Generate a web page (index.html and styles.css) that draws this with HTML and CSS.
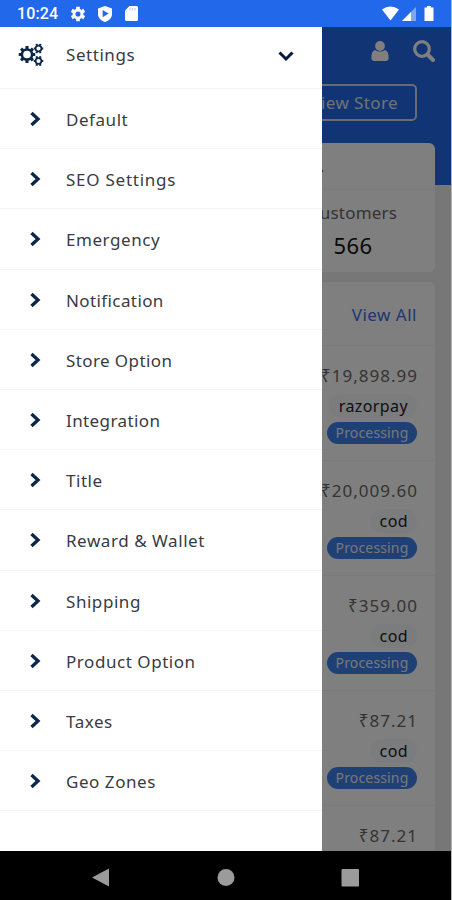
FILE: index.html
```html
<!DOCTYPE html>
<html lang="en">
<head>
<meta charset="utf-8">
<title>Settings</title>
<link rel="stylesheet" href="styles.css">
</head>
<body>
<svg class="defs" width="0" height="0">
  <symbol id="chev" viewBox="0 0 12 16"><path d="M2.500 2 9 8 2.500 14" fill="none" stroke="#0c2848" stroke-width="3.300"/></symbol>
  <symbol id="gear" viewBox="-10 -10 20 20">
    <circle r="6" fill="none" stroke="currentColor" stroke-width="3"/>
    <path d="M0-10V-6M0 10V6M-10 0H-6M10 0H6M-7-7-4.300-4.300M7 7 4.300 4.300M-7 7-4.300 4.300M7-7 4.300-4.300" stroke="currentColor" stroke-width="3.600"/>
  </symbol>
  <symbol id="gear-small" viewBox="-10 -10 20 20">
    <circle r="5.800" fill="none" stroke="currentColor" stroke-width="3.400"/>
    <path d="M-4-9.500-3-6M4-9.500 3-6M-4 9.500-3 6M4 9.500 3 6M-10 0H-6M10 0H6" stroke="currentColor" stroke-width="4.200"/>
  </symbol>
</svg>
<div class="phone">
  <header class="status">
    <span class="clock">10:24</span>
    <svg class="s-gear" width="16" height="16" viewBox="-10 -10 20 20"><circle r="5" fill="none" stroke="#fff" stroke-width="3.600"/><path d="M0-9V-6M0 9V6M-7.800-4.500-5-3M7.800 4.500 5 3M-7.800 4.500-5 3M7.800-4.500 5-3" stroke="#fff" stroke-width="4.600"/></svg>
    <svg class="s-shield" width="14" height="16" viewBox="0 0 14 16"><path d="M7 0 14 2.600V8c0 4-3 6.800-7 8-4-1.200-7-4-7-8V2.600z" fill="#fff"/><path d="M4.600 4 10.600 7.600 4.600 11.200z" fill="#2268ea"/></svg>
    <svg class="s-card" width="13" height="15" viewBox="0 0 13 15"><path d="M4.500 0H11.500Q13 0 13 1.500V13.500Q13 15 11.500 15H1.500Q0 15 0 13.500V4.500z" fill="#fff"/><path d="M5 2v2.500M7.500 2v2.500M10 2v2.500" stroke="#b9cff8" stroke-width="1.200"/></svg>
    <svg class="s-right" width="54" height="16" viewBox="0 0 54 16"><path d="M1 3.500Q9.500-2.500 18 3.500L9.500 14.500z" fill="#fff"/><path d="M21 15 35 1V15z" fill="#7ea6f5"/><path d="M21 15 30 6V15z" fill="#fff"/><path d="M46 0h4v1.500h2.500V15H43.500V1.500H46z" fill="#fff"/></svg>
  </header>
  <div class="stage">
    <main class="page">
      <div class="hero">
        <div class="tools">
          <svg width="18" height="20" viewBox="0 0 18 20" fill="currentColor"><circle cx="9" cy="5" r="4.900"/><path d="M4 9Q9 12 14 9 18 10.500 17.600 17 17.500 20 15 20H3Q.5 20 .4 17 0 10.500 4 9z"/></svg>
          <svg width="22" height="22" viewBox="0 0 22 22" fill="none" stroke="currentColor"><circle cx="9" cy="9" r="7.300" stroke-width="3.200"/><path d="M14.500 14.500 20 20" stroke-width="4" stroke-linecap="round"/></svg>
        </div>
        <a class="store">View Store</a>
      </div>
      <section class="card stats">
        <div class="stats-head">Store Statistics.</div>
        <div class="stat"><div class="label">Customers</div><div class="count">566</div></div>
      </section>
      <section class="card orders">
        <a class="all">View All</a>
        <div class="order"><span class="sum">₹19,898.99</span><span class="pay">razorpay</span><span class="state">Processing</span></div>
        <div class="order"><span class="sum">₹20,009.60</span><span class="pay">cod</span><span class="state">Processing</span></div>
        <div class="order"><span class="sum">₹359.00</span><span class="pay">cod</span><span class="state">Processing</span></div>
        <div class="order"><span class="sum">₹87.21</span><span class="pay">cod</span><span class="state">Processing</span></div>
        <div class="order"><span class="sum">₹87.21</span></div>
      </section>
    </main>
    <div class="scrim"></div>
    <nav class="drawer">
      <div class="group">
        <svg class="cogs" width="27" height="24" viewBox="0 0 27 24" color="#0c2848"><use href="#gear" x="0.500" y="3" width="17" height="17"/><use href="#gear-small" x="15.500" y="0.500" width="10" height="10"/><use href="#gear-small" x="15.500" y="13" width="10" height="10"/></svg>
        <span>Settings</span>
        <svg class="down" width="16" height="12" viewBox="0 0 16 12"><path d="M1.500 2.500 8 9 14.500 2.500" fill="none" stroke="#071a40" stroke-width="3"/></svg>
      </div>
      <div class="item"><svg><use href="#chev"/></svg><span>Default</span></div>
      <div class="item"><svg><use href="#chev"/></svg><span class="wide">SEO Settings</span></div>
      <div class="item"><svg><use href="#chev"/></svg><span>Emergency</span></div>
      <div class="item"><svg><use href="#chev"/></svg><span class="tight">Notification</span></div>
      <div class="item"><svg><use href="#chev"/></svg><span class="tight">Store Option</span></div>
      <div class="item"><svg><use href="#chev"/></svg><span class="tight">Integration</span></div>
      <div class="item"><svg><use href="#chev"/></svg><span>Title</span></div>
      <div class="item"><svg><use href="#chev"/></svg><span>Reward &amp; Wallet</span></div>
      <div class="item"><svg><use href="#chev"/></svg><span>Shipping</span></div>
      <div class="item"><svg><use href="#chev"/></svg><span>Product Option</span></div>
      <div class="item"><svg><use href="#chev"/></svg><span>Taxes</span></div>
      <div class="item"><svg><use href="#chev"/></svg><span>Geo Zones</span></div>
    </nav>
  </div>
  <footer class="navbar">
    <svg width="451" height="49" viewBox="0 0 451 49" fill="#9b9b9b"><path d="M92 26.500 109 17.500V35.500z"/><circle cx="226" cy="26.500" r="8.500"/><rect x="341.500" y="18" width="17.500" height="17.500" rx="1"/></svg>
  </footer>
</div>
</body>
</html>
```
FILE: styles.css
```css
* { box-sizing: border-box; }
body { margin: 0; background: #fff; font-family: "Noto Sans", sans-serif; }
.defs { display: block; }
.phone { width: 452px; height: 900px; overflow: hidden; display: flex; flex-direction: column; background: #b5b5b5; }
.status { width: 451px; height: 27px; flex: none; background: #2268ea; display: flex; align-items: center; padding: 0 16px 0 17px; color: #fff; }
.clock { font: 500 16px/27px Roboto, sans-serif; width: 53px; letter-spacing: .1px; }
.s-shield { margin-left: 12px; }
.s-card { margin-left: 13px; }
.s-right { margin-left: auto; }

.stage { display: grid; width: 451px; height: 824px; flex: none; overflow: hidden; grid-template-rows: 824px; grid-template-columns: 451px; }
.stage > * { grid-area: 1 / 1; }
.scrim { background: rgba(0, 0, 0, .5); z-index: 1; }
.drawer { width: 322px; background: #fff; z-index: 2; font-size: 17px; color: #383b42; letter-spacing: .55px; }
.group { height: 62px; display: flex; align-items: center; padding: 0 28px 6px 18px; border-bottom: 1px solid #f3f3f3; }
.group span { margin-left: 21px; }
.down { margin-left: auto; margin-top: 2px; }
.item { height: 60.200px; display: flex; align-items: center; padding: 2px 0 0 29px; border-bottom: 1px solid #f5f5f5; }
.item svg { width: 12px; height: 16px; margin: -1px 25px 0 0; }
.wide { letter-spacing: .75px; }
.tight { letter-spacing: .4px; }

.page { background: #eee; overflow: hidden; color: #686868; }
.hero { height: 158px; background: #2268ea; display: flex; flex-direction: column; align-items: flex-end; padding: 13px 16px 0 0; }
.tools { display: flex; gap: 24px; align-items: center; color: #fff; }
.store { margin: 22px 18px 0 0; width: 120px; height: 37px; border: 2px solid #d4d8e2; border-radius: 5px; color: #e0e2e8; font-size: 17px; line-height: 34px; text-align: right; padding-right: 17px; letter-spacing: .4px; white-space: nowrap; }
.card { background: #fff; border-radius: 6px; width: 420px; margin-left: 15px; }
.stats { margin-top: -42px; height: 129px; position: relative; display: flex; flex-direction: column; }
.stats-head { height: 47px; line-height: 47px; padding-right: 111px; text-align: right; border-bottom: 1px solid #f4f4f4; font-size: 16px; }
.stat { width: 164px; align-self: flex-end; text-align: center; line-height: 1; }
.label { font-size: 17px; margin-top: 14px; letter-spacing: .2px; }
.count { font-size: 22px; color: #111; margin-top: 13px; letter-spacing: .4px; }
.orders { margin-top: 10px; height: 620px; display: flex; flex-direction: column; }
.all { height: 64px; flex: none; line-height: 66px; text-align: right; padding-right: 18px; color: #3c6fe0; font-size: 17px; letter-spacing: .5px; border-bottom: 1px solid #f7f7f7; }
.order { height: 115px; flex: none; display: flex; flex-direction: column; align-items: flex-end; padding: 19px 18px 0 0; border-bottom: 1px solid #f4f4f4; }
.sum { font-size: 17px; line-height: 22px; letter-spacing: 1px; margin-right: -1px; }
.pay { background: #f6f8fa; color: #222; border-radius: 12px; height: 24px; line-height: 24px; padding: 0 9px 0 10px; font-size: 16px; margin-top: 7px; letter-spacing: .4px; }
.state { background: #3d80ea; color: #eee; border-radius: 11px; width: 90px; height: 22px; line-height: 22px; text-align: center; font-size: 14px; margin-top: 4px; letter-spacing: .15px; }

.navbar { width: 451px; height: 49px; background: #000; }
.navbar svg { display: block; }
```
